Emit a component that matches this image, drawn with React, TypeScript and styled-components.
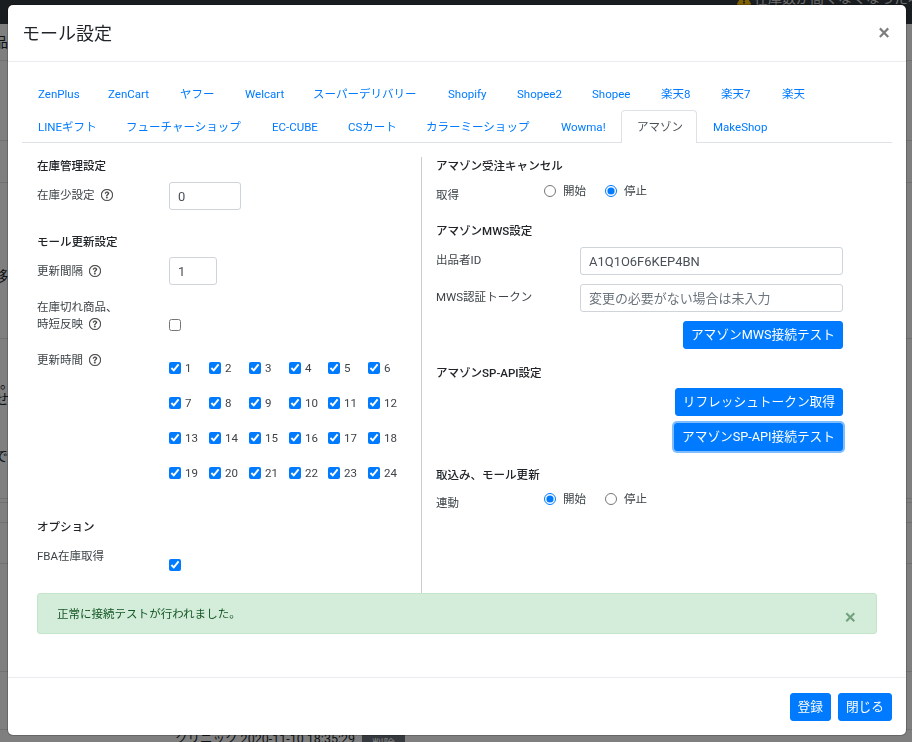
import React from 'react'
import styled, { createGlobalStyle } from 'styled-components'
import { FaExclamationTriangle } from 'react-icons/fa'
import { BsQuestionCircle } from 'react-icons/bs'

const GlobalStyle = createGlobalStyle`
    html, body {
        margin: 0;
        height: 100%;
        overflow: hidden;
    }
    body {
        font-family: Roboto, "Noto Sans CJK JP", sans-serif;
        font-size: 11.52px;
        line-height: 18px;
        color: #212529;
        background: white;
    }
    * {
        box-sizing: border-box;
    }
`

const Page = styled.div`
    height: 742px;
    overflow: hidden;
`

const Navbar = styled.div`
    height: 24px;
    background: #343a40;
    overflow: hidden;
    display: flex;
    align-items: flex-start;
    gap: 3px;
    padding-left: 737px;
    color: #ddd;
    font-size: 14px;
    line-height: 14px;
    white-space: nowrap;

    svg {
        color: #ffc107;
        margin-top: -8px;
        flex: none;
    }
    span {
        margin-top: -9px;
    }
`

const BgRow = styled.div<{ $h: number }>`
    height: ${p => p.$h}px;
    border-bottom: 1px solid #dee2e6;
    display: flex;
    flex-direction: column;
    align-items: flex-start;
    font-size: 14px;
    line-height: 16px;
    white-space: nowrap;
`

const BgText = styled.span<{ $indent: number; $top: number }>`
    margin: ${p => p.$top}px 0 0 ${p => p.$indent}px;
    color: #212529;
`

const LogRow = styled.div`
    display: flex;
    align-items: center;
    gap: 7px;
    margin: -8px 0 0 175px;
    font-size: 12.5px;
    white-space: nowrap;
`

const DeleteButton = styled.span`
    background: #6c757d;
    color: white;
    font-size: 11.5px;
    padding: 3px 10px;
    border-radius: 3px;
    margin-top: 10px;
`

const Backdrop = styled.div`
    position: fixed;
    inset: 0;
    background: rgba(0, 0, 0, 0.5);
`

const Modal = styled.div`
    position: fixed;
    left: 8px;
    top: 5px;
    width: 898px;
    height: 730px;
    display: flex;
    flex-direction: column;
    background: white;
    border-radius: 5px;
    box-shadow: 0 0 0 1px rgba(0, 0, 0, 0.2);
`

const ModalHeader = styled.div`
    height: 57px;
    flex: none;
    display: flex;
    justify-content: space-between;
    align-items: center;
    padding: 0 16px 0 14px;
    border-bottom: 1px solid #e9ecef;
`

const ModalTitle = styled.h5`
    margin: 0;
    font-size: 18px;
    line-height: 27px;
    font-weight: 400;
`

const CloseX = styled.span`
    font-size: 22px;
    font-weight: 500;
    line-height: 20px;
    color: #000;
    opacity: 0.5;
`

const ModalBody = styled.div`
    flex: 1;
    padding: 15px 14px 0;
`

const TabRow = styled.div<{ $line?: boolean }>`
    height: 33px;
    display: flex;
    align-items: stretch;
    border-bottom: ${p => (p.$line ? '1px solid #dee2e6' : 'none')};
`

const Tab = styled.a<{ $active?: boolean; $w: number }>`
    width: ${p => p.$w}px;
    flex: none;
    padding-left: 15px;
    display: flex;
    align-items: center;
    white-space: nowrap;
    color: ${p => (p.$active ? '#495057' : '#007bff')};
    background: white;
    border: 1px solid ${p => (p.$active ? '#dee2e6' : 'transparent')};
    border-bottom: 0;
    border-radius: 4px 4px 0 0;
    height: ${p => (p.$active ? '33px' : 'auto')};
`

const Columns = styled.div`
    display: grid;
    grid-template-columns: 399px 1fr;
    margin-top: 14px;
    height: 436px;
`

const LeftCol = styled.div`
    padding-left: 15px;
`

const RightCol = styled.div`
    border-left: 1px solid #ccc;
    padding-left: 14px;
`

const Heading = styled.div<{ $mt?: number }>`
    margin-top: ${p => p.$mt ?? 0}px;
    height: 18px;
    font-weight: 500;
    font-size: 11.52px;
    color: #212529;
`

const FieldRow = styled.div<{ $mt: number; $label: number }>`
    margin-top: ${p => p.$mt}px;
    display: grid;
    grid-template-columns: ${p => p.$label}px 1fr;
    align-items: start;
`

const Label = styled.label<{ $pt?: number }>`
    padding-top: ${p => p.$pt ?? 1}px;
    color: #3d4348;
    display: block;
    line-height: 17px;
    white-space: nowrap;
`

const HelpIcon = styled(BsQuestionCircle)`
    font-size: 12px;
    margin-left: 6px;
    vertical-align: -2px;
    color: #333;
    stroke: currentColor;
    stroke-width: 0.4;
`

const TextInput = styled.input<{ $w?: number }>`
    width: ${p => (p.$w ? `${p.$w}px` : '100%')};
    height: 28px;
    padding: 0 8px;
    font: inherit;
    font-size: 12.96px;
    color: #495057;
    border: 1px solid #ced4da;
    border-radius: 3px;
    outline: none;

    &::placeholder {
        color: #6c757d;
    }
`

const Check = styled.input.attrs({ type: 'checkbox' })<{ $mt?: number }>`
    width: 12px;
    height: 12px;
    margin: ${p => p.$mt ?? 0}px 0 0;
    accent-color: #007bff;
    flex: none;
    display: block;
`

const HourGrid = styled.div`
    display: grid;
    grid-template-columns: 40px 40px 40px 39px 40px 40px;
    margin-top: -1px;
`

const HourItem = styled.label`
    height: 35px;
    display: flex;
    align-items: center;
    gap: 4px;
    color: #3d4348;
`

const RadioRow = styled.div`
    display: flex;
    gap: 19px;
    margin-top: -4px;
`

const RadioItem = styled.label`
    display: flex;
    align-items: center;
    gap: 7px;
    color: #3d4348;
`

const Radio = styled.input.attrs({ type: 'radio' })`
    width: 12px;
    height: 12px;
    margin: 0;
    accent-color: #007bff;
`

const ButtonRow = styled.div<{ $mt: number }>`
    margin-top: ${p => p.$mt}px;
    width: 407px;
    display: flex;
    justify-content: flex-end;
`

const Button = styled.button<{ $focus?: boolean }>`
    height: 28px;
    padding: 0 7px;
    font: inherit;
    font-size: 12.7px;
    line-height: 26px;
    color: white;
    white-space: nowrap;
    background: #007bff;
    border: 1px solid #007bff;
    border-radius: 3px;
    box-shadow: ${p => (p.$focus ? '0 0 0 2px rgba(0, 123, 255, 0.5)' : 'none')};
`

const SuccessAlert = styled.div`
    height: 41px;
    margin: 0 15px;
    padding: 0 20px 0 19px;
    display: flex;
    justify-content: space-between;
    align-items: center;
    background: #d4edda;
    border: 1px solid #c3e6cb;
    border-radius: 3px;
    color: #155724;
`

const AlertClose = styled.span`
    font-size: 21px;
    font-weight: 500;
    line-height: 20px;
    opacity: 0.5;
    margin: 6px 0 0;
    color: #155724;
`

const ModalFooter = styled.div`
    height: 58px;
    flex: none;
    display: flex;
    justify-content: flex-end;
    align-items: flex-start;
    gap: 7px;
    padding: 15px 14px 0;
    border-top: 1px solid #e9ecef;
`

const row1: [string, number][] = [
    ['ZenPlus', 70], ['ZenCart', 72], ['ヤフー', 65], ['Welcart', 68], ['スーパーデリバリー', 135],
    ['Shopify', 69], ['Shopee2', 75], ['Shopee', 69], ['楽天8', 60], ['楽天7', 61], ['楽天', 60],
]
const row2: [string, number][] = [
    ['LINEギフト', 88], ['フューチャーショップ', 146], ['EC-CUBE', 76], ['CSカート', 78], ['カラーミーショップ', 135],
    ['Wowma!', 76], ['アマゾン', 76], ['MakeShop', 90],
]
const hours = Array.from({ length: 24 }, (_, i) => i + 1)

const App: React.FC = () => {
    return (
        <Page>
            <GlobalStyle />
            <Navbar>
                <FaExclamationTriangle size={14} />
                <span>在庫数が高くなくなった場合</span>
            </Navbar>
            <BgRow $h={37}><BgText $indent={-6} $top={10}>品番</BgText></BgRow>
            <BgRow $h={80} />
            <BgRow $h={42} />
            <BgRow $h={156}><BgText $indent={-6} $top={85}>移</BgText></BgRow>
            <BgRow $h={160}>
                <BgText $indent={0} $top={36}>。</BgText>
                <BgText $indent={-5} $top={0}>せ</BgText>
                <BgText $indent={-6} $top={41}>で</BgText>
            </BgRow>
            <BgRow $h={4} />
            <BgRow $h={20} />
            <BgRow $h={41} />
            <BgRow $h={108} />
            <BgRow $h={58} />
            <LogRow>
                クリニック 2020-11-10 18:35:29
                <DeleteButton>削除</DeleteButton>
            </LogRow>
            <Backdrop />
            <Modal>
                <ModalHeader>
                    <ModalTitle>モール設定</ModalTitle>
                    <CloseX>×</CloseX>
                </ModalHeader>
                <ModalBody>
                    <TabRow>
                        {row1.map(([name, w]) => <Tab key={name} $w={w}>{name}</Tab>)}
                    </TabRow>
                    <TabRow $line>
                        {row2.map(([name, w]) => <Tab key={name} $w={w} $active={name === 'アマゾン'}>{name}</Tab>)}
                    </TabRow>
                    <Columns>
                        <LeftCol>
                            <Heading>在庫管理設定</Heading>
                            <FieldRow $mt={7} $label={132}>
                                <Label $pt={5}>在庫少設定<HelpIcon /></Label>
                                <TextInput $w={72} defaultValue="0" />
                            </FieldRow>
                            <Heading $mt={23}>モール更新設定</Heading>
                            <FieldRow $mt={6} $label={132}>
                                <Label $pt={6}>更新間隔<HelpIcon /></Label>
                                <TextInput $w={48} defaultValue="1" />
                            </FieldRow>
                            <FieldRow $mt={13} $label={132}>
                                <Label>在庫切れ商品、<br />時短反映<HelpIcon /></Label>
                                <Check $mt={21} />
                            </FieldRow>
                            <FieldRow $mt={18} $label={132}>
                                <Label>更新時間<HelpIcon /></Label>
                                <HourGrid>
                                    {hours.map(h => (
                                        <HourItem key={h}><Check defaultChecked />{h}</HourItem>
                                    ))}
                                </HourGrid>
                            </FieldRow>
                            <Heading $mt={28}>オプション</Heading>
                            <FieldRow $mt={10} $label={132}>
                                <Label $pt={2}>FBA在庫取得</Label>
                                <Check $mt={13} defaultChecked />
                            </FieldRow>
                        </LeftCol>
                        <RightCol>
                            <Heading>アマゾン受注キャンセル</Heading>
                            <FieldRow $mt={11} $label={108}>
                                <Label>取得</Label>
                                <RadioRow>
                                    <RadioItem><Radio name="cancel" />開始</RadioItem>
                                    <RadioItem><Radio name="cancel" defaultChecked />停止</RadioItem>
                                </RadioRow>
                            </FieldRow>
                            <Heading $mt={18}>アマゾンMWS設定</Heading>
                            <FieldRow $mt={7} $label={144}>
                                <Label $pt={5}>出品者ID</Label>
                                <TextInput $w={263} defaultValue="A1Q1O6F6KEP4BN" />
                            </FieldRow>
                            <FieldRow $mt={9} $label={144}>
                                <Label $pt={5}>MWS認証トークン</Label>
                                <TextInput $w={263} placeholder="変更の必要がない場合は未入力" />
                            </FieldRow>
                            <ButtonRow $mt={9}>
                                <Button>アマゾンMWS接続テスト</Button>
                            </ButtonRow>
                            <Heading $mt={15}>アマゾンSP-API設定</Heading>
                            <ButtonRow $mt={6}>
                                <Button>リフレッシュトークン取得</Button>
                            </ButtonRow>
                            <ButtonRow $mt={7}>
                                <Button $focus>アマゾンSP-API接続テスト</Button>
                            </ButtonRow>
                            <Heading $mt={15}>取込み、モール更新</Heading>
                            <FieldRow $mt={10} $label={108}>
                                <Label>連動</Label>
                                <RadioRow>
                                    <RadioItem><Radio name="link" defaultChecked />開始</RadioItem>
                                    <RadioItem><Radio name="link" />停止</RadioItem>
                                </RadioRow>
                            </FieldRow>
                        </RightCol>
                    </Columns>
                    <SuccessAlert>
                        正常に接続テストが行われました。
                        <AlertClose>×</AlertClose>
                    </SuccessAlert>
                </ModalBody>
                <ModalFooter>
                    <Button>登録</Button>
                    <Button>閉じる</Button>
                </ModalFooter>
            </Modal>
        </Page>
    )
}

export default App
